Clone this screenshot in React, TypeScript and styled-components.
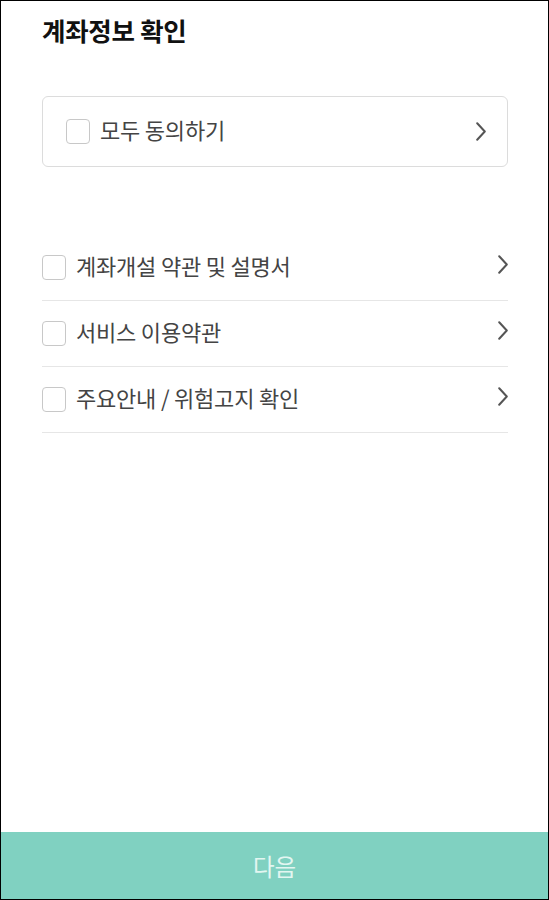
import React from "react";
import styled, { createGlobalStyle } from "styled-components";

const GlobalStyle = createGlobalStyle`
  html, body {
    margin: 0;
    padding: 0;
    background: #ffffff;
  }
  body {
    font-family: "Noto Sans CJK KR", "Noto Sans", sans-serif;
  }
`;

const Screen = styled.div`
  box-sizing: border-box;
  width: 549px;
  height: 900px;
  border: 1px solid #000;
  display: flex;
  flex-direction: column;
  background: #fff;
`;

const Content = styled.div`
  padding: 0 40px 0 41px;
  display: flex;
  flex-direction: column;
`;

const Title = styled.h1`
  margin: 0;
  padding-top: 12px;
  font-size: 25.5px;
  line-height: 34px;
  font-weight: 700;
  color: #111;
  letter-spacing: -0.3px;
`;

const AllCard = styled.div`
  margin-top: 49px;
  height: 71px;
  box-sizing: border-box;
  border: 1px solid #dcdcdc;
  border-radius: 6px;
  padding: 0 21px 0 23px;
  display: flex;
  align-items: center;
`;

const List = styled.ul`
  list-style: none;
  margin: 68px 0 0;
  padding: 0;
`;

const Row = styled.li`
  height: 66px;
  box-sizing: border-box;
  border-bottom: 1px solid #e6e6e6;
  display: flex;
  align-items: center;
`;

const Box = styled.span`
  flex: none;
  width: 24px;
  height: 25px;
  box-sizing: border-box;
  border: 1.5px solid #c8c8c8;
  border-radius: 4px;
  background: #fff;
`;

const Label = styled.span`
  flex: 1;
  margin-left: 10px;
  padding-bottom: 5px;
  font-size: 22px;
  line-height: 30px;
  color: #444;
  letter-spacing: -0.2px;
`;

const Chevron = styled.svg<{ $lift?: number }>`
  flex: none;
  width: 10px;
  height: 19px;
  margin-top: ${(p) => (p.$lift ? -p.$lift : 0)}px;
`;

const NextButton = styled.button`
  margin-top: auto;
  height: 67px;
  border: none;
  background: #80d1c1;
  color: #e3f6f1;
  font-family: "Noto Sans CJK KR", "Noto Sans", sans-serif;
  font-size: 23.5px;
  padding: 0;
`;

const Arrow: React.FC<{ lift?: number }> = ({ lift }) => (
  <Chevron $lift={lift} viewBox="0 0 10 19">
    <polyline
      points="1.2,1.2 8.8,9.5 1.2,17.8"
      fill="none"
      stroke="#555"
      strokeWidth="2"
      strokeLinecap="round"
      strokeLinejoin="round"
    />
  </Chevron>
);

const terms = ["계좌개설 약관 및 설명서", "서비스 이용약관", "주요안내 / 위험고지 확인"];

const App: React.FC = () => {
  return (
    <>
      <GlobalStyle />
      <Screen>
        <Content>
          <Title>계좌정보 확인</Title>
          <AllCard>
            <Box />
            <Label>모두 동의하기</Label>
            <Arrow />
          </AllCard>
          <List>
            {terms.map((t) => (
              <Row key={t}>
                <Box />
                <Label>{t}</Label>
                <Arrow lift={6} />
              </Row>
            ))}
          </List>
        </Content>
        <NextButton>다음</NextButton>
      </Screen>
    </>
  );
};

export default App;
